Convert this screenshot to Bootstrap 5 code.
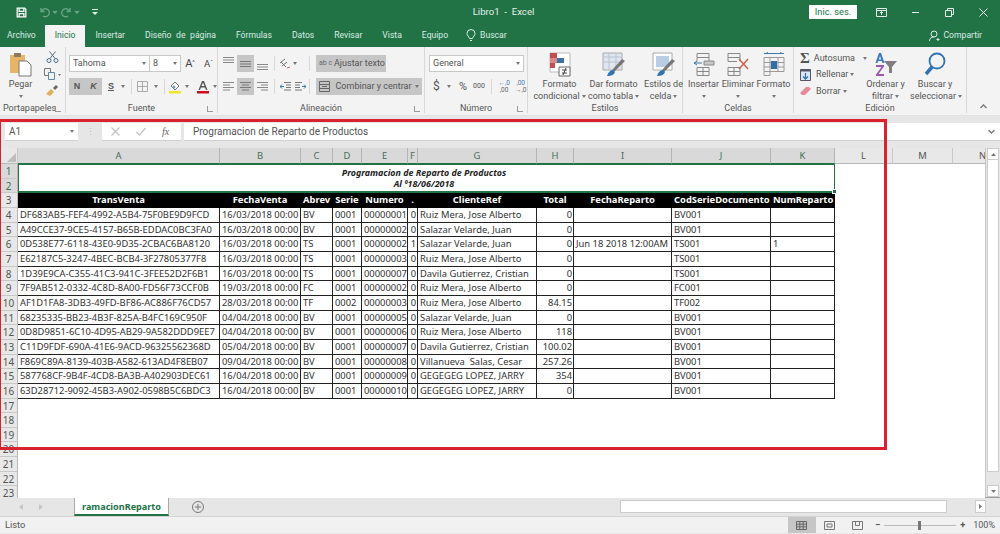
<!DOCTYPE html>
<html lang="es">
<head>
  <meta charset="UTF-8">
  <title>Libro1 - Excel</title>
  <meta name="viewport" content="width=device-width, initial-scale=1">
  <link href="https://cdn.jsdelivr.net/npm/bootstrap@5.3.3/dist/css/bootstrap.min.css" rel="stylesheet">
  <style>
    html, body { height: 534px; overflow: hidden; background: #e6e6e6; }
    body { font-family: Roboto, "Liberation Sans", sans-serif; font-size: 9px; color: #444; line-height: 1.2; }
    svg { display: block; flex: none; }
    .xl-app { position: relative; width: 1000px; height: 534px; overflow: hidden; }

    /* title + tabs */
    .xl-title { height: 24px; background: #217346; color: #e4efe9; padding: 0 0 0 16px; }
    .xl-title-text { flex: 1; text-align: center; font-size: 9.6px; padding-left: 100px; }
    .xl-login { width: 48px; height: 14px; background: #fff; color: #217346; font-size: 9.3px; line-height: 14px; text-align: center; margin-right: 7px; }
    .xl-winbtn { width: 34px; }
    .xl-tabs { height: 23px; background: #217346; color: #dcebe3; font-size: 8.6px; word-spacing: 2.5px; }
    .xl-tab { padding: 0 10px; height: 22px; margin-top: 1px; line-height: 20px; }
    .xl-tab-on { background: #f3f3f3; color: #217346; }

    /* ribbon */
    .xl-ribbon { height: 69px; background: #f3f3f3; border-bottom: 1px solid #e2e2e2; }
    .xl-group { position: relative; height: 66px; border-right: 1px solid #d8d8d8; flex: none; }
    .xl-group-label { position: absolute; left: 0; right: 0; bottom: -2px; height: 13px; line-height: 13px; text-align: center; color: #555; }
    .xl-launch { position: absolute; right: 4px; bottom: 1px; width: 6px; height: 6px; border-left: 1px solid #999; border-bottom: 1px solid #999; }
    .xl-group-body { height: 54px; }
    .xl-bigbtn { text-align: center; line-height: 11.5px; color: #555; flex: none; white-space: nowrap; }
    .xl-bigbtn svg { margin: 5px auto 2px; }
    .xl-caret { display: inline-block; width: 0; height: 0; border-left: 2px solid transparent; border-right: 2px solid transparent; border-top: 3px solid #777; vertical-align: middle; margin-left: 2px; }
    .xl-input { height: 17px; background: #fff; border: 1px solid #c8c8c8; padding: 0 3px; color: #555; line-height: 15px; }
    .xl-hl { background: #c6c6c6; }
    .xl-tool { height: 17px; width: 17px; flex: none; }
    .xl-vsep { width: 1px; height: 15px; background: #d8d8d8; flex: none; }
    .xl-b { font-weight: 700; color: #555; font-family: "Liberation Sans", sans-serif; font-size: 9px; line-height: 17px; }
    .xl-wide { height: 17px; line-height: 17px; padding: 0 3px; color: #555; white-space: nowrap; }
    .xl-editrow { height: 16.5px; color: #555; white-space: nowrap; }

    /* formula bar */
    .xl-formula { height: 27px; background: #e6e6e6; padding: 7px 0 2px 5px; }
    .xl-fbox { height: 18px; background: #fff; color: #555; font-size: 10px; line-height: 18px; border-bottom: 1px solid #d0d0d0; }

    /* sheet */
    .xl-sheet-wrap { height: 355px; background: #e6e6e6; padding-top: 5px; border-bottom: 1px solid #9c9c9c; }
    .xl-sheet { flex: none; width: 985px; height: 350px; overflow: hidden; background: #fff; display: grid;
      grid-template-columns: 18px 202px 81px 32px 29px 46px 10px 119px 37px 98px 99px 64px 58px 60px 60px;
      grid-template-rows: 16px; grid-auto-rows: 14.67px;
      font-family: "Noto Sans", "Liberation Sans", sans-serif; font-size: 9.4px; color: #333; }
    .xl-colhead { background: #e8e8e8; border-right: 1px solid #c8c8c8; border-bottom: 1px solid #b8b8b8; text-align: center; line-height: 15px; color: #555; overflow: hidden; }
    .xl-colhead-sel { background: #d9d9d9; color: #44705a; border-right-color: #b4b4b4; border-bottom-color: #217346; }
    .xl-corner { position: relative; }
    .xl-corner::after { content: ""; position: absolute; right: 1px; bottom: 1px; border-left: 9px solid transparent; border-bottom: 9px solid #bdbdbd; }
    .xl-rowhead { grid-column: 1; background: #e8e8e8; border-bottom: 1px solid #c8c8c8; border-right: 1px solid #b8b8b8; text-align: center; line-height: 14px; color: #555; font-size: 10px; }
    .xl-rowhead-sel { background: #d9d9d9; color: #44705a; }
    .xl-merged { grid-column: span 11; grid-row: span 2; border: 1px solid #217346; border-bottom-width: 2px; position: relative; text-align: center; font: italic 700 8.9px/11px "Noto Sans", sans-serif; color: #222; padding-top: 2px; padding-right: 5px; }
    .xl-handle { position: absolute; right: -3px; bottom: -3px; width: 5px; height: 5px; background: #217346; border: 1px solid #fff; }
    .xl-cell { border-right: 1px solid #222; border-bottom: 1px solid #222; padding: 0 2px; white-space: nowrap; overflow: hidden; line-height: 14px; }
    .xl-hd { background: #000; color: #fff; font-weight: 700; text-align: center; border-color: #000; }
    .xl-num { text-align: right; padding-right: 1px; }

    /* vertical scrollbar */
    .xl-vbar { width: 15px; background: #e6e6e6; border-left: 1px solid #c8c8c8; }
    .xl-arrowbox { height: 12px; background: #fff; border: 1px solid #ccc; margin: 0 1px; display: flex; align-items: center; justify-content: center; }
    .xl-vthumb { height: 312px; background: #fff; border: 1px solid #ccc; border-top: 0; margin: 0 1px; }

    /* tab strip + status */
    .xl-strip { height: 19px; background: #e6e6e6; border-bottom: 1px solid #d4d4d4; }
    .xl-sheettab { width: 95px; height: 18px; margin-left: 31px; background: #fff; color: #217346; font: 700 9.1px/17px "Noto Sans", sans-serif; text-align: center; border-left: 1px solid #aaa; border-right: 1px solid #aaa; border-bottom: 2px solid #217346; margin-top: -1px; }
    .xl-hthumb { position: absolute; left: 620px; top: 2px; width: 327px; height: 13px; background: #fff; border: 1px solid #ccc; }
    .xl-harrow { position: absolute; left: 975px; top: 2px; width: 11px; height: 13px; background: #fff; border: 1px solid #ccc; display: flex; align-items: center; justify-content: center; }
    .xl-status { height: 16px; background: #f1f1f1; color: #555; line-height: 16px; padding-left: 5px; font-size: 9.3px; }
    .xl-viewbtn { width: 28px; height: 16px; display: flex; align-items: center; justify-content: center; }
    .xl-slider { width: 72px; height: 1px; background: #bbb; position: relative; margin: 0 2px; }
    .xl-slider::after { content: ""; position: absolute; left: 34px; top: -4px; width: 3px; height: 9px; background: #777; }

    /* red box drawn over the screenshot */
    .xl-redbox { position: absolute; left: -2px; top: 119px; width: 889px; height: 331px; border: 3.5px solid #d8222e; pointer-events: none; }
  </style>
</head>
<body>
<div class="xl-app d-flex flex-column">

  <!-- title bar -->
  <div class="xl-title d-flex align-items-center">
    <svg width="11" height="11" viewBox="0 0 14 14" fill="none" stroke="#fff" stroke-width="1.6"><path d="M1.5 1.5h9.5l1.5 1.5v9.500h-11z"/><path d="M4 1.5v4h6v-4M4 12.5v-4h6v4"/></svg>
    <svg width="42" height="12" viewBox="0 0 42 12" fill="none" stroke="#6ca388" stroke-width="1.3" style="margin-left:11px"><path d="M3 2v3.500h3.500M3.500 5.500a4 4 0 1 1 1.500 4.500"/><path d="M15 5l2 2 2-2" fill="#6ca388"/><path d="M32 2v3.500h-3.500M31.500 5.500a4 4 0 1 0-1.500 4.500"/><path d="M37 5l2 2 2-2" fill="#6ca388"/></svg>
    <svg style="margin-left:12px" width="6" height="7" viewBox="0 0 6 7" fill="#dcebe3"><path d="M0 0h6v1H0zM0 3h6L3 6z"/></svg>
    <div class="xl-title-text">Libro1 &nbsp;-&nbsp; Excel</div>
    <div class="xl-login">Inic. ses.</div>
    <div class="xl-winbtn d-flex justify-content-center"><svg width="11" height="9" viewBox="0 0 11 9" fill="none" stroke="#e4efe9"><path d="M.5.500h10v8H.5zM.5 2.500h10M5.500 7V4M4 5l1.500-1.500L7 5"/></svg></div>
    <div class="xl-winbtn d-flex justify-content-center"><svg width="9" height="9" viewBox="0 0 9 9" stroke="#e4efe9"><path d="M1 4.500h7"/></svg></div>
    <div class="xl-winbtn d-flex justify-content-center"><svg width="9" height="9" viewBox="0 0 9 9" fill="none" stroke="#e4efe9"><path d="M.5 2.500h6v6h-6zM2.500 2.500V.500h6v6h-2"/></svg></div>
    <div class="xl-winbtn d-flex justify-content-center"><svg width="9" height="9" viewBox="0 0 9 9" stroke="#e4efe9"><path d="M.5.500l8 8M8.500.500l-8 8"/></svg></div>
  </div>

  <!-- ribbon tabs -->
  <div class="xl-tabs d-flex align-items-center">
    <div class="xl-tab" style="margin-left:-3px;padding-right:9px">Archivo</div>
    <div class="xl-tab xl-tab-on">Inicio</div>
    <div class="xl-tab">Insertar</div>
    <div class="xl-tab">Diseño de página</div>
    <div class="xl-tab">Fórmulas</div>
    <div class="xl-tab">Datos</div>
    <div class="xl-tab">Revisar</div>
    <div class="xl-tab">Vista</div>
    <div class="xl-tab">Equipo</div>
    <svg class="ms-2" width="10" height="13" viewBox="0 0 10 13" fill="none" stroke="#dcebe3"><path d="M3.500 9.500C3 7.500 1 6.500 1 4.500a4 4 0 0 1 8 0C9 6.500 7 7.500 6.500 9.500zM4 11.500h2"/></svg>
    <div class="ms-1">Buscar</div>
    <div class="ms-auto d-flex align-items-center" style="padding-right:18px">
      <svg class="me-1" width="11" height="12" viewBox="0 0 11 12" fill="none" stroke="#dcebe3"><circle cx="5" cy="4" r="3"/><path d="M.5 11c0-3 2-4 4.500-4M7.500 9.500h3M9 8v3"/></svg>
      <span>Compartir</span>
    </div>
  </div>

  <!-- ribbon -->
  <div class="xl-ribbon d-flex">

    <div class="xl-group" style="width:66px">
      <div class="xl-group-body d-flex">
        <div class="xl-bigbtn" style="width:37px;margin-left:2px">
          <svg width="23" height="25" viewBox="0 0 23 25"><path d="M1 3h15v18H1z" fill="#e6b566"/><path d="M5 1h7v4H5z" fill="#8c7a5c"/><path d="M10 9h8l4 4v11H10z" fill="#fff" stroke="#777"/></svg>
          <div>Pegar</div>
          <div><span class="xl-caret m-0"></span></div>
        </div>
        <div class="d-flex flex-column align-items-center" style="gap:5px;padding-top:4px;width:26px">
          <svg width="13" height="12" viewBox="0 0 13 12" fill="none" stroke="#4a6d8c"><circle cx="3" cy="9.500" r="2"/><circle cx="10" cy="9.500" r="2"/><path d="M4 7.500L9.500.500M9 7.500L3.500.500"/></svg>
          <svg width="17" height="12" viewBox="0 0 17 12" fill="none" stroke="#777"><path d="M.5.500h6v7h-6z"/><path d="M4.500 4.500h6v7h-6z" fill="#f3f3f3" stroke="#5f87a8"/><path d="M14 6l3 0-1.500 2z" fill="#777" stroke="none"/></svg>
          <svg width="12" height="11" viewBox="0 0 12 11"><path d="M0 9l5-5 3 3-4 4z" fill="#e0b05c"/><path d="M7 3l3-3 2 2-3 3z" fill="#666"/></svg>
        </div>
      </div>
      <div class="xl-group-label" style="text-align:left;padding-left:3px">Portapapeles</div><div class="xl-launch"></div>
    </div>

    <div class="xl-group" style="width:152px">
      <div class="xl-group-body" style="padding:8px 0 0 3px">
        <div class="d-flex align-items-center" style="height:17px">
          <div class="xl-input d-flex align-items-center justify-content-between" style="width:81px">Tahoma<span class="xl-caret"></span></div>
          <div class="xl-input d-flex align-items-center justify-content-between border-start-0" style="width:31px">8<span class="xl-caret"></span></div>
          <div class="text-center" style="width:20px;font-size:11px;margin-left:-1px">A<sup style="font-size:6px">^</sup></div>
          <div class="text-center" style="width:17px;font-size:9.5px">A<sup style="font-size:6px">ˇ</sup></div>
        </div>
        <div class="d-flex align-items-center" style="margin-top:6px;height:17px">
          <div class="xl-tool xl-hl text-center xl-b" style="width:16px">N</div>
          <div class="xl-tool xl-hl text-center xl-b" style="font-style:italic">K</div>
          <div class="text-center xl-b" style="width:20px;text-decoration:underline;margin-left:1px">S</div>
          <span class="xl-caret"></span>
          <div class="xl-vsep" style="margin:0 5px 0 6px"></div>
          <svg width="11" height="11" viewBox="0 0 11 11" fill="none" stroke="#aaa"><path d="M.5.500h10v10H.5zM5.500.500v10M.5 5.500h10"/></svg>
          <span class="xl-caret" style="margin-left:6px"></span>
          <div class="xl-vsep" style="margin:0 4px 0 6px"></div>
          <svg width="12" height="14" viewBox="0 0 12 14"><path d="M2 6l4-4 4 4-4 4z" fill="#fff" stroke="#777"/><circle cx="5" cy="7" r="1.500" fill="#6aa5c8"/><path d="M0 11h12v2.500H0z" fill="#f2e62a"/></svg>
          <span class="xl-caret" style="margin-left:4px"></span>
          <svg class="ms-2" width="12" height="14" viewBox="0 0 12 14"><path d="M1.500 10L5 1h2l3.500 9H9L8 7.500H4L3 10zM4.500 6h3L6 2.500z" fill="#555"/><path d="M0 11h12v2.500H0z" fill="#c8101c"/></svg>
          <span class="xl-caret" style="margin-left:4px"></span>
        </div>
      </div>
      <div class="xl-group-label">Fuente</div><div class="xl-launch"></div>
    </div>

    <div class="xl-group" style="width:207px">
      <div class="xl-group-body" style="padding:8px 0 0 2px">
        <div class="d-flex align-items-center" style="height:17px">
          <div class="xl-tool d-flex justify-content-center" style="align-items:flex-start;padding-top:2px"><svg width="11" height="6" viewBox="0 0 11 6" stroke="#888"><path d="M0 .5h11M0 3h11M0 5.500h11"/></svg></div>
          <div class="xl-tool xl-hl d-flex justify-content-center align-items-center"><svg width="11" height="6" viewBox="0 0 11 6" stroke="#777"><path d="M0 .5h11M0 3h11M0 5.500h11"/></svg></div>
          <div class="xl-tool d-flex justify-content-center align-items-end" style="padding-bottom:2px"><svg width="11" height="6" viewBox="0 0 11 6" stroke="#888"><path d="M0 .5h11M0 3h11M0 5.500h11"/></svg></div>
          <div class="xl-vsep" style="margin:0 4px 0 3px"></div>
          <svg width="11" height="11" viewBox="0 0 11 11" fill="none" stroke="#777"><path d="M1 5l5-4M3 8l5-4M2 4l5 5"/><path d="M8 10l3-1" stroke="#c66"/></svg>
          <span class="xl-caret" style="margin-left:3px"></span>
          <div class="xl-vsep" style="margin:0 6px 0 12px"></div>
          <div class="xl-wide xl-hl d-flex align-items-center" style="width:70px">
            <span style="font-size:7px;line-height:7px;width:11px;color:#666">ab c</span><span class="ms-1">Ajustar texto</span>
          </div>
        </div>
        <div class="d-flex align-items-center" style="margin-top:6px;height:17px">
          <div class="xl-tool d-flex justify-content-center align-items-center"><svg width="11" height="9" viewBox="0 0 11 9" stroke="#888"><path d="M0 .5h11M0 3h7M0 5.500h11M0 8h7"/></svg></div>
          <div class="xl-tool xl-hl d-flex justify-content-center align-items-center"><svg width="11" height="9" viewBox="0 0 11 9" stroke="#777"><path d="M0 .5h11M2 3h7M0 5.500h11M2 8h7"/></svg></div>
          <div class="xl-tool d-flex justify-content-center align-items-center"><svg width="11" height="9" viewBox="0 0 11 9" stroke="#888"><path d="M0 .5h11M4 3h7M0 5.500h11M4 8h7"/></svg></div>
          <div class="xl-vsep" style="margin:0 5px 0 3px"></div>
          <svg width="11" height="9" viewBox="0 0 11 9" fill="none" stroke="#777"><path d="M4 .5h7M6 3h5M6 5.500h5M4 8h7"/><path d="M4 4.500H0M2 2.500l-2 2 2 2" stroke="#3b78a8"/></svg>
          <svg class="ms-1" width="11" height="9" viewBox="0 0 11 9" fill="none" stroke="#777"><path d="M0 .5h7M0 3h5M0 5.500h5M0 8h7"/><path d="M7 4.500h4M9 2.500l2 2-2 2" stroke="#3b78a8"/></svg>
          <div class="xl-vsep" style="margin:0 6px 0 3px"></div>
          <div class="xl-wide xl-hl d-flex align-items-center justify-content-between" style="width:106px">
            <svg width="11" height="11" viewBox="0 0 11 11" fill="none" stroke="#666"><path d="M.5.500h10v10H.5zM.5 3.500h10M.5 7.500h10M3 5.500h5"/></svg>
            <span class="ms-1">Combinar y centrar</span><span class="xl-caret"></span>
          </div>
        </div>
      </div>
      <div class="xl-group-label">Alineación</div><div class="xl-launch"></div>
    </div>

    <div class="xl-group" style="width:103px">
      <div class="xl-group-body" style="padding:8px 0 0 4px">
        <div class="xl-input d-flex align-items-center justify-content-between" style="width:95px;height:17px">General<span class="xl-caret"></span></div>
        <div class="d-flex align-items-center" style="margin-top:6px;height:17px;padding-left:4px;color:#555">
          <span style="font-size:12px;width:10px">$</span><span class="xl-caret" style="margin-left:5px"></span>
          <span class="ms-2" style="font-size:11px">%</span>
          <span style="font-size:7px;margin-left:6px">000</span>
          <div class="xl-vsep" style="margin:0 6px"></div>
          <span style="font-size:6.5px;line-height:7px;width:14px;text-align:center;color:#4d7ea8">←,0<br><span style="color:#666">,00</span></span>
          <span class="ms-1" style="font-size:6.5px;line-height:7px;width:14px;text-align:center;color:#4d7ea8">,00<br><span style="color:#666">→,0</span></span>
        </div>
      </div>
      <div class="xl-group-label">Número</div><div class="xl-launch"></div>
    </div>

    <div class="xl-group d-flex" style="width:155px">
      <div class="xl-bigbtn" style="width:55px;margin-left:4px">
        <svg width="22" height="25" viewBox="0 0 22 25"><path d="M1 1h20v19H1z" fill="#fff" stroke="#bbb"/><path d="M1 1h7v5H1zM1 11h5v5H1z" fill="#c0504d"/><path d="M8 6h7v5H8z" fill="#3d72a6"/><path d="M1 6h7v5H1z" fill="#d88"/><path d="M10 15h11v9H10z" fill="#fff" stroke="#666"/><path d="M13 18h5M13 21h5M17 16l-3 7" stroke="#444" fill="none"/></svg>
        <div>Formato</div><div>condicional<span class="xl-caret"></span></div>
      </div>
      <div class="xl-bigbtn" style="width:53px">
        <svg width="24" height="25" viewBox="0 0 24 25"><path d="M1 1h19v17H1z" fill="#dfe6ee" stroke="#aaa"/><path d="M1 5h19M7 1v17M14 1v17M1 10h19" stroke="#b8c4d0"/><path d="M8 23l3-6 9-10 3 2-10 10z" fill="#777"/><path d="M5 24c1-3 3-6 6-6l2 2c-1 3-4 4-8 4z" fill="#2f74b0"/></svg>
        <div>Dar formato</div><div>como tabla<span class="xl-caret"></span></div>
      </div>
      <div class="xl-bigbtn" style="width:43px;margin-left:2px">
        <svg width="24" height="25" viewBox="0 0 24 25"><path d="M1 1h19v17H1z" fill="#fff" stroke="#aaa"/><path d="M4 4h13v11H4z" fill="#b9cde4"/><path d="M8 23l3-6 9-10 3 2-10 10z" fill="#777"/><path d="M5 24c1-3 3-6 6-6l2 2c-1 3-4 4-8 4z" fill="#2f74b0"/></svg>
        <div>Estilos de</div><div>celda<span class="xl-caret"></span></div>
      </div>
      <div class="xl-group-label">Estilos</div>
    </div>

    <div class="xl-group d-flex" style="width:111px">
      <div class="xl-bigbtn" style="width:35px;margin-left:3px">
        <svg width="22" height="25" viewBox="0 0 22 25" fill="none" stroke="#888"><path d="M4 1.500h12v4H4zM4 5.500v4M16 5.500v4M4 15.500h12v8H4zM10 15.500v8M4 19.500h12"/><path d="M11 9h10v4H11z" fill="#c8c8c8"/><path d="M9 11H1M4 9l-3 2 3 2" stroke="#3b78a8"/></svg>
        <div>Insertar</div><div><span class="xl-caret m-0"></span></div>
      </div>
      <div class="xl-bigbtn" style="width:34px">
        <svg width="24" height="25" viewBox="0 0 24 25" fill="none" stroke="#888"><path d="M2 1.500h12v4H2zM2 5.500v4M14 5.500v4M2 15.500h12v8H2zM8 15.500v8M2 19.500h12M2 9.500h9"/><path d="M13 7l9 10M22 7l-9 10" stroke="#d0614a" stroke-width="1.500"/></svg>
        <div>Eliminar</div><div><span class="xl-caret m-0"></span></div>
      </div>
      <div class="xl-bigbtn" style="width:37px">
        <svg width="22" height="25" viewBox="0 0 22 25" fill="none" stroke="#999"><path d="M1 5.500h20v14H1zM7 5.500v18h-6v-4M15 5.500v14M1 10.500h20M1 15h20"/><path d="M8 9h6v8H8z" fill="#2f6ea8" stroke="none"/><path d="M1 1.500h20M3 1.500l2-1M19 1.500l-2-1" stroke="#3b78a8"/></svg>
        <div>Formato</div><div><span class="xl-caret m-0"></span></div>
      </div>
      <div class="xl-group-label">Celdas</div>
    </div>

    <div class="xl-group d-flex" style="width:173px">
      <div style="width:70px;padding:3px 0 0 6px">
        <div class="xl-editrow d-flex align-items-center"><span style="width:15px;font:700 15px/15px 'Liberation Serif',serif;color:#555">Σ</span><span class="ms-1">Autosuma</span><span class="xl-caret" style="margin-left:8px"></span></div>
        <div class="xl-editrow d-flex align-items-center"><svg width="11" height="12" viewBox="0 0 11 12"><path d="M.5.500h10v11H.5z" fill="#dbe8f3" stroke="#556"/><path d="M.5.500h10v2H.5z" fill="#556"/><path d="M5.500 4v6M3 7.500l2.500 2.500L8 7.500" stroke="#2f74b0" fill="none" stroke-width="1.300"/></svg><span style="margin-left:5px">Rellenar</span><span class="xl-caret"></span></div>
        <div class="xl-editrow d-flex align-items-center"><svg width="11" height="10" viewBox="0 0 11 10"><path d="M0 7l6-6h3l2 2-6 6H2z" fill="#e88a9a"/></svg><span style="margin-left:5px">Borrar</span><span class="xl-caret"></span></div>
      </div>
      <div class="xl-bigbtn" style="width:49px;margin-left:-3px">
        <svg width="22" height="25" viewBox="0 0 22 25"><path d="M4 1L.5 11h2l.7-2h3.600l.7 2h2L6 1zM3.800 7.500L5 4l1.200 3.500z" fill="#3b78c0"/><path d="M1 13h8v1.500L3.500 22H9v2H1v-1.500L6.500 15H1z" fill="#9a59b5"/><path d="M9 9h13l-5 6v6h-3v-6z" fill="#7f7f7f"/></svg>
        <div>Ordenar y</div><div>filtrar<span class="xl-caret"></span></div>
      </div>
      <div class="xl-bigbtn" style="width:50px">
        <svg width="22" height="25" viewBox="0 0 22 25" fill="none"><circle cx="13" cy="9" r="7.500" stroke="#2f74b0" stroke-width="1.800"/><path d="M8 15l-6 7" stroke="#2f74b0" stroke-width="3.500"/></svg>
        <div>Buscar y</div><div>seleccionar<span class="xl-caret"></span></div>
      </div>
      <div class="xl-group-label">Edición</div>
    </div>

    <div class="flex-grow-1 d-flex align-items-end justify-content-center" style="padding-bottom:6px">
      <svg width="7" height="5" viewBox="0 0 7 5" fill="none" stroke="#777" stroke-width="1.300"><path d="M.5 4l3-3 3 3"/></svg>
    </div>
  </div>

  <!-- formula bar -->
  <div class="xl-formula d-flex">
    <div class="xl-fbox d-flex justify-content-between align-items-center" style="width:73px;padding:0 4px">A1<span class="xl-caret"></span></div>
    <div class="text-center" style="width:24px;color:#bbb;line-height:18px">⋮</div>
    <div class="xl-fbox d-flex align-items-center" style="width:79px;padding-left:9px;color:#bbb">
      <svg width="9" height="9" viewBox="0 0 9 9" stroke="#c4c4c4" stroke-width="1.300"><path d="M.5.500l8 8M8.500.500l-8 8"/></svg>
      <svg style="margin-left:16px" width="10" height="9" viewBox="0 0 10 9" fill="none" stroke="#c4c4c4" stroke-width="1.300"><path d="M.5 5l3 3 6-7"/></svg>
      <span style="margin-left:16px;font:italic 10px 'Liberation Serif',serif;color:#666">fx</span>
    </div>
    <div class="xl-fbox flex-grow-1 d-flex justify-content-between align-items-center" style="margin-left:3px;padding:0 5px 0 9px">Programacion de Reparto de Productos
      <svg width="7" height="5" viewBox="0 0 7 5" fill="none" stroke="#777" stroke-width="1.300"><path d="M.5 1l3 3 3-3"/></svg>
    </div>
  </div>

  <!-- sheet -->
  <div class="xl-sheet-wrap d-flex">
    <div class="xl-sheet" id="sheet"></div>
    <div class="xl-vbar d-flex flex-column flex-grow-1">
      <div class="xl-arrowbox"><svg width="5" height="3" viewBox="0 0 5 3" fill="#777"><path d="M2.500 0L5 3H0z"/></svg></div>
      <div class="xl-vthumb"></div>
      <div class="xl-arrowbox mt-auto"><svg width="5" height="3" viewBox="0 0 5 3" fill="#777"><path d="M0 0h5L2.500 3z"/></svg></div>
    </div>
  </div>

  <!-- sheet tabs -->
  <div class="xl-strip d-flex align-items-center position-relative">
    <svg style="margin-left:19px" width="4" height="6" viewBox="0 0 4 6" fill="#c4c4c4"><path d="M4 0v6L0 3z"/></svg>
    <svg style="margin-left:16px" width="4" height="6" viewBox="0 0 4 6" fill="#c4c4c4"><path d="M0 0v6l4-3z"/></svg>
    <div class="xl-sheettab">ramacionReparto</div>
    <svg style="margin-left:23px" width="12" height="12" viewBox="0 0 12 12" fill="none" stroke="#777"><circle cx="6" cy="6" r="5.500"/><path d="M6 3v6M3 6h6"/></svg>
    <div class="xl-hthumb"></div>
    <div class="xl-harrow"><svg width="3" height="5" viewBox="0 0 3 5" fill="#777"><path d="M0 0l3 2.500L0 5z"/></svg></div>
  </div>

  <!-- status bar -->
  <div class="xl-status d-flex align-items-center">
    <span>Listo</span>
    <div class="ms-auto d-flex align-items-center" style="padding-right:5px">
      <div class="xl-viewbtn xl-hl"><svg width="11" height="9" viewBox="0 0 11 9" fill="none" stroke="#666"><path d="M.5.500h10v8H.5zM.5 3.200h10M.5 5.800h10M3.800.5v8M7.200.5v8"/></svg></div>
      <div class="xl-viewbtn"><svg width="11" height="9" viewBox="0 0 11 9" fill="none" stroke="#777"><path d="M.5.500h10v8H.5zM3 3h5v3H3z"/></svg></div>
      <div class="xl-viewbtn"><svg width="11" height="9" viewBox="0 0 11 9" fill="none" stroke="#777"><path d="M.5.500h10v8H.5zM3.500.5v4h4v-4"/></svg></div>
      <span style="margin:0 2px 0 3px;font-weight:700">−</span>
      <div class="xl-slider"></div>
      <span style="margin:0 8px 0 2px;font-weight:700">+</span>
      <span style="font-size:9px">100%</span>
    </div>
  </div>

  <div class="xl-redbox"></div>
</div>

<script src="https://cdn.jsdelivr.net/npm/bootstrap@5.3.3/dist/js/bootstrap.bundle.min.js"></script>
<script>
  // hoja: filas de datos del reporte
  const colNames = "ABCDEFGHIJKLMN".split("");
  const header = ["TransVenta","FechaVenta","Abrev","Serie","Numero",".","ClienteRef","Total","FechaReparto","CodSerieDocumento","NumReparto"];
  const rows = [
    ["DF683AB5-FEF4-4992-A5B4-75F0BE9D9FCD","16/03/2018 00:00","BV","0001","00000001","0","Ruiz Mera, Jose Alberto","0","","BV001",""],
    ["A49CCE37-9CE5-4157-B65B-EDDAC0BC3FA0","16/03/2018 00:00","BV","0001","00000002","0","Salazar Velarde, Juan","0","","BV001",""],
    ["0D538E77-6118-43E0-9D35-2CBAC6BA8120","16/03/2018 00:00","TS","0001","00000002","1","Salazar Velarde, Juan","0","Jun 18 2018 12:00AM","TS001","1"],
    ["E62187C5-3247-4BEC-BCB4-3F27805377F8","16/03/2018 00:00","TS","0001","00000003","0","Ruiz Mera, Jose Alberto","0","","TS001",""],
    ["1D39E9CA-C355-41C3-941C-3FEE52D2F6B1","16/03/2018 00:00","TS","0001","00000007","0","Davila Gutierrez, Cristian","0","","TS001",""],
    ["7F9AB512-0332-4C8D-8A00-FD56F73CCF0B","19/03/2018 00:00","FC","0001","00000002","0","Ruiz Mera, Jose Alberto","0","","FC001",""],
    ["AF1D1FA8-3DB3-49FD-BF86-AC886F76CD57","28/03/2018 00:00","TF","0002","00000003","0","Ruiz Mera, Jose Alberto","84.15","","TF002",""],
    ["68235335-BB23-4B3F-825A-B4FC169C950F","04/04/2018 00:00","BV","0001","00000005","0","Salazar Velarde, Juan","0","","BV001",""],
    ["0D8D9851-6C10-4D95-AB29-9A582DDD9EE7","04/04/2018 00:00","BV","0001","00000006","0","Ruiz Mera, Jose Alberto","118","","BV001",""],
    ["C11D9FDF-690A-41E6-9ACD-96325562368D","05/04/2018 00:00","BV","0001","00000007","0","Davila Gutierrez, Cristian","100.02","","BV001",""],
    ["F869C89A-8139-403B-A582-613AD4F8EB07","09/04/2018 00:00","BV","0001","00000008","0","Villanueva  Salas, Cesar","257.26","","BV001",""],
    ["587768CF-9B4F-4CD8-BA3B-A402903DEC61","16/04/2018 00:00","BV","0001","00000009","0","GEGEGEG LOPEZ, JARRY","354","","BV001",""],
    ["63D28712-9092-45B3-A902-0598B5C6BDC3","16/04/2018 00:00","BV","0001","00000010","0","GEGEGEG LOPEZ, JARRY","0","","BV001",""]
  ];

  let html = '<div class="xl-colhead xl-corner"></div>';
  colNames.forEach((c, i) => {
    html += `<div class="xl-colhead${i < 11 ? " xl-colhead-sel" : ""}">${c}</div>`;
  });
  html += '<div class="xl-rowhead xl-rowhead-sel">1</div>';
  html += '<div class="xl-merged">Programacion de Reparto de Productos<br>Al º18/06/2018<div class="xl-handle"></div></div>';
  html += '<div class="xl-rowhead xl-rowhead-sel">2</div>';
  html += '<div class="xl-rowhead">3</div>';
  header.forEach(h => { html += `<div class="xl-cell xl-hd">${h}</div>`; });
  rows.forEach((r, n) => {
    html += `<div class="xl-rowhead">${n + 4}</div>`;
    r.forEach((v, i) => {
      const num = i === 5 || i === 7 ? " xl-num" : "";
      html += `<div class="xl-cell${num}">${v.replace("  ", "&nbsp; ")}</div>`;
    });
  });
  for (let n = 17; n <= 23; n++) html += `<div class="xl-rowhead">${n}</div>`;
  document.getElementById("sheet").innerHTML = html;
</script>
</body>
</html>
